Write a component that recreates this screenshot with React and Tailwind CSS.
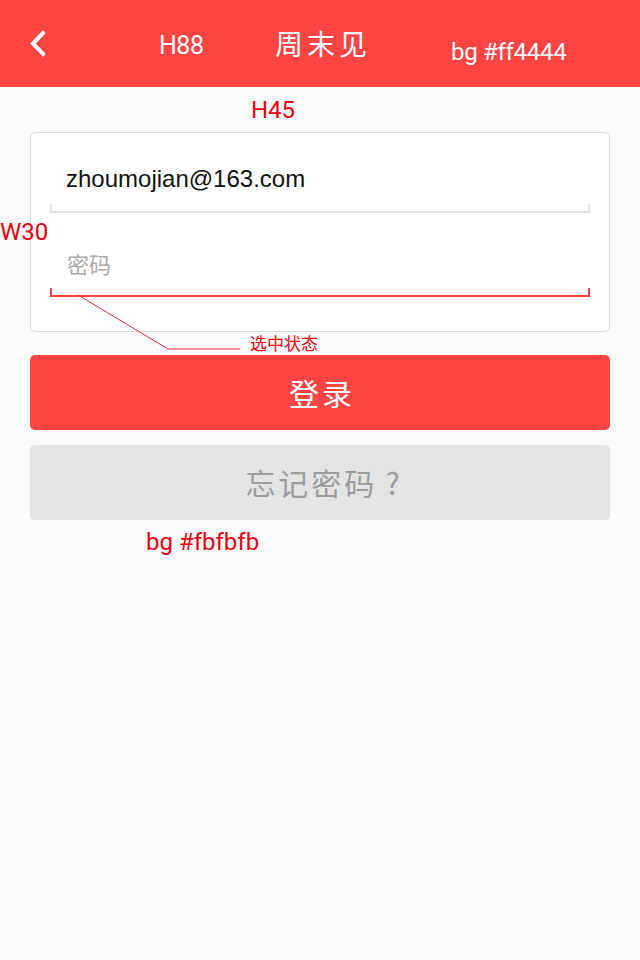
export default function App() {
  const ann = "font-['Roboto','Noto_Sans_CJK_SC',sans-serif] text-[#e60012]";
  return (
    <div className="relative min-h-[960px] w-[640px] bg-[#fbfbfb] font-['Noto_Sans','Noto_Sans_CJK_SC',sans-serif]">
      {/* Header */}
      <header className="relative flex h-[87px] items-center bg-[#ff4444] px-[28px]">
        <svg className="shrink-0" width="20" height="27" viewBox="0 0 20 27" fill="none">
          <path d="M15 3 L5 13.5 L15 24" stroke="white" strokeWidth="4" strokeLinecap="square" strokeLinejoin="miter" />
        </svg>
        <div className="flex flex-1 justify-center">
          <h1 className="mb-[2px] ml-[6px] font-['Noto_Sans_CJK_SC',sans-serif] text-[28px] leading-[36px] tracking-[4px] text-white">周末见</h1>
        </div>
        <div className="w-[20px] shrink-0" />
        <span className="absolute left-[159px] top-[28px] font-['Roboto',sans-serif] text-[25px] leading-[36px] tracking-[-0.5px] text-white">H88</span>
        <span className="absolute left-[451px] top-[35px] font-['Roboto',sans-serif] text-[24px] leading-[34px] tracking-[-0.3px] text-white">bg #ff4444</span>
      </header>

      {/* Card */}
      <div className="mx-[30px] mt-[45px] rounded-[5px] border border-[#dcdcdc] bg-white px-[19px] pb-[34px] pt-[34px]">
        <div className="pl-[16px] font-['Liberation_Sans',sans-serif] text-[24px] leading-[24px] text-[#111]">zhoumojian@163.com</div>
        <div className="mt-[13px] h-[9px] border-x-2 border-b-2 border-[#e4e4e4]" />
        <div className="mt-[38px] pl-[17px] font-['Noto_Sans_CJK_SC',sans-serif] text-[22px] leading-[24px] text-[#aaaaaa]">密码</div>
        <div className="mt-[13px] h-[9px] border-x-2 border-b-2 border-[#ff4444]" />
      </div>

      {/* Buttons */}
      <div className="mx-[30px] mt-[23px] flex flex-col gap-[15px]">
        <button className="flex h-[75px] items-center justify-center rounded-[5px] bg-[#ff4444] pl-[4px] font-['Noto_Sans_CJK_SC',sans-serif] text-[30px] tracking-[3px] text-white">登录</button>
        <button className="flex h-[75px] items-center justify-center rounded-[5px] bg-[#e4e4e4] pl-[8px] font-['Noto_Sans_CJK_SC',sans-serif] text-[30px] tracking-[3px] text-[#9c9c9c]">
          忘记密码<span className="ml-[8px]">?</span>
        </button>
      </div>

      {/* Annotations */}
      <span className={`absolute left-[251px] top-[93px] text-[24px] leading-[34px] ${ann}`}>H45</span>
      <span className={`absolute left-0 top-[215px] text-[24px] leading-[34px] ${ann}`}>W30</span>
      <span className={`absolute left-[250px] top-[332px] text-[17px] leading-[24px] ${ann}`}>选中状态</span>
      <span className={`absolute left-[146px] top-[525px] text-[24px] leading-[34px] ${ann}`}>bg #fbfbfb</span>
      <svg className="pointer-events-none absolute left-0 top-0" width="640" height="960">
        <polyline points="78,295 168,349 240,349" fill="none" stroke="#e0303a" strokeWidth="1" />
      </svg>
    </div>
  );
}
